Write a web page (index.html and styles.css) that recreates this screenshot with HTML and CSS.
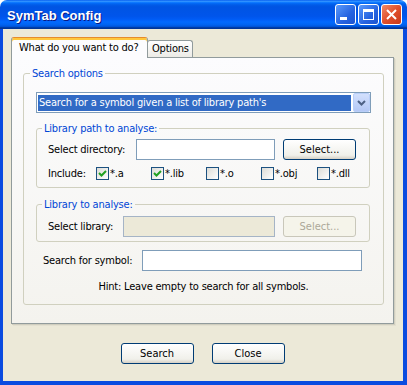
FILE: index.html
```html
<!DOCTYPE html>
<html lang="en">
<head>
    <meta charset="UTF-8">
    <title>SymTab Config</title>
    <link rel="stylesheet" href="styles.css">
</head>
<body>
    <div class="window">
        <div class="titlebar">
            <span class="title">SymTab Config</span>
            <div class="caption-buttons">
                <span class="cap-btn">
                    <svg width="19" height="19" viewBox="0 0 19 19"><rect x="4" y="12" width="7" height="3" fill="#fff"/></svg>
                </span>
                <span class="cap-btn">
                    <svg width="19" height="19" viewBox="0 0 19 19"><rect x="4.5" y="4.5" width="10" height="10" fill="none" stroke="#fff"/><rect x="4" y="4" width="11" height="3" fill="#fff"/></svg>
                </span>
                <span class="cap-btn close">
                    <svg width="19" height="19" viewBox="0 0 19 19"><path d="M5 5 L14 14 M14 5 L5 14" stroke="#fff" stroke-width="2"/></svg>
                </span>
            </div>
        </div>

        <div class="client">
            <div class="tabs">
                <div class="tab active">What do you want to do?</div>
                <div class="tab options">Options</div>
            </div>

            <div class="tab-page">
                <fieldset class="group outer">
                    <legend>Search options</legend>

                    <div class="combo">
                        <span class="combo-value">Search for a symbol given a list of library path's</span>
                        <span class="combo-button">
                            <svg width="9" height="6" viewBox="0 0 9 6"><path d="M1 1 L4.5 4.5 L8 1" fill="none" stroke="#4d6185" stroke-width="2"/></svg>
                        </span>
                    </div>

                    <fieldset class="group inner lib-path">
                        <legend>Library path to analyse:</legend>
                        <div class="row first">
                            <span class="label dir-label">Select directory:</span>
                            <input type="text" class="field dir-field">
                            <button class="btn select-btn">Select...</button>
                        </div>
                        <div class="row include">
                            <span class="label include-label">Include:</span>
                            <span class="check-item"><span class="check on"><svg width="11" height="11" viewBox="0 0 11 11"><path d="M2 5 L4.5 7.5 L9 3" fill="none" stroke="#21a121" stroke-width="2"/></svg></span>*.a</span>
                            <span class="check-item"><span class="check on"><svg width="11" height="11" viewBox="0 0 11 11"><path d="M2 5 L4.5 7.5 L9 3" fill="none" stroke="#21a121" stroke-width="2"/></svg></span>*.lib</span>
                            <span class="check-item"><span class="check"></span>*.o</span>
                            <span class="check-item"><span class="check"></span>*.obj</span>
                            <span class="check-item"><span class="check"></span>*.dll</span>
                        </div>
                    </fieldset>

                    <fieldset class="group inner lib-file">
                        <legend>Library to analyse:</legend>
                        <div class="row first">
                            <span class="label lib-label">Select library:</span>
                            <input type="text" class="field lib-field" disabled>
                            <button class="btn select-btn" disabled>Select...</button>
                        </div>
                    </fieldset>

                    <div class="row symbol-row">
                        <span class="label symbol-label">Search for symbol:</span>
                        <input type="text" class="field symbol-field">
                    </div>

                    <div class="hint">Hint: Leave empty to search for all symbols.</div>
                </fieldset>
            </div>

            <div class="dialog-buttons">
                <button class="btn">Search</button>
                <button class="btn">Close</button>
            </div>
        </div>
    </div>
</body>
</html>
```

FILE: styles.css
```css
body {
    margin: 0;
    font-family: "DejaVu Sans Condensed", "DejaVu Sans", sans-serif;
    font-size: 11px;
    letter-spacing: -0.2px;
    color: #000;
}

.window {
    width: 407px;
    height: 385px;
    display: flex;
    flex-direction: column;
}

/* title bar */
.titlebar {
    height: 29px;
    flex: none;
    box-sizing: border-box;
    display: flex;
    align-items: center;
    justify-content: space-between;
    padding: 0 5px 0 7px;
    border-radius: 7px 7px 0 0;
    background: linear-gradient(#0058ee 0%, #3593ff 4%, #288eff 6%, #127dff 8%, #036ffc 10%, #0262ee 14%, #0057e5 20%, #0054e3 24%, #0055eb 56%, #005bf5 66%, #026afe 76%, #0062ef 86%, #0052d6 92%, #0040ab 94%, #003092 100%);
}

.title {
    color: #fff;
    font: bold 13px "Liberation Sans", sans-serif;
    letter-spacing: 0;
    text-shadow: 1px 1px #0a1883;
    padding-top: 2px;
}

.caption-buttons {
    display: flex;
    gap: 2px;
}

.cap-btn {
    width: 21px;
    height: 21px;
    box-sizing: border-box;
    border: 1px solid #fff;
    border-radius: 3px;
    background: linear-gradient(135deg, #5a9afc, #2663e0 60%, #1c54d0);
    display: flex;
    align-items: center;
    justify-content: center;
}

.cap-btn.close {
    background: linear-gradient(135deg, #f08a68, #e1502c 50%, #c8381a);
}

/* dialog body */
.client {
    flex: 1;
    background: #ece9d8;
    border: solid #0a4be0;
    border-width: 0 4px 4px 3px;
    padding: 8px 0 0 8px;
}

.tabs {
    display: flex;
    align-items: flex-end;
    height: 20px;
    position: relative;
    z-index: 1;
}

.tab {
    height: 17px;
    box-sizing: border-box;
    border: 1px solid #919b9c;
    border-bottom: none;
    border-radius: 3px 3px 0 0;
    background: linear-gradient(#fff, #ecebe6);
    line-height: 15px;
    white-space: nowrap;
}

.tab.active {
    width: 137px;
    height: 21px;
    margin-bottom: -1px;
    padding-left: 7px;
    border-top-color: #e68b2c;
    box-shadow: inset 0 2px 0 #ffc73c;
    background: #fcfcfe;
    line-height: 19px;
}

.tab.options {
    width: 46px;
    margin-left: -1px;
    padding-left: 4px;
}

.tab-page {
    width: 383px;
    height: 267px;
    box-sizing: border-box;
    border: 1px solid #919b9c;
    background: linear-gradient(#fcfcfe, #f4f3ee);
    box-shadow: 1px 1px 0 #d0cebf, 2px 2px 0 #e3e0d0;
    padding: 9px 0 0 11px;
}

/* group boxes */
.group {
    margin: 0;
    border: 1px solid #d0d0bf;
    border-radius: 3px;
    box-sizing: border-box;
}

.group legend {
    color: #0046d5;
    line-height: 13px;
    padding: 0 2px;
    margin-left: -6px;
}

.group.outer {
    width: 361px;
    padding: 0 12px 11px 12px;
}

.group.inner {
    width: 334px;
    padding: 0 0 0 11px;
}

.lib-path {
    margin-top: 9px;
    padding-bottom: 6px !important;
}

.lib-file {
    margin-top: 10px;
    padding-bottom: 4px !important;
}

.combo {
    margin-top: 12px;
    width: 335px;
    height: 21px;
    box-sizing: border-box;
    border: 1px solid #7f9db9;
    background: #fff;
    display: flex;
}

.combo-value {
    flex: 1;
    margin: 2px 2px 1px 1px;
    background: #316ac5;
    color: #fff;
    line-height: 16px;
    padding-left: 1px;
    white-space: nowrap;
    overflow: hidden;
}

.combo-button {
    width: 17px;
    box-sizing: border-box;
    border: 1px solid #b9cff9;
    border-radius: 2px;
    background: linear-gradient(#d3e0fd, #b4c8f5);
    display: flex;
    align-items: center;
    justify-content: center;
}

.row {
    display: flex;
    align-items: center;
    white-space: nowrap;
}

.row.first {
    margin-top: 4px;
    height: 21px;
}

.lib-file .row.first {
    margin-top: 5px;
}

.row.include {
    margin-top: 5px;
    height: 16px;
}

.dir-label {
    width: 88px;
}

.include-label {
    width: 48px;
}

.lib-label {
    width: 75px;
}

.field {
    height: 21px;
    box-sizing: border-box;
    border: 1px solid #7f9db9;
    background: #fff;
    margin: 0;
    padding: 0 3px;
    font: inherit;
}

.field:disabled {
    background: #ece9d8;
    border-color: #a5b4c6;
}

.dir-field {
    width: 139px;
}

.lib-field {
    width: 152px;
}

.check-item {
    width: 55px;
    display: flex;
    align-items: center;
}

.check-item:last-child {
    width: auto;
    margin-left: 1px;
}

.check {
    width: 13px;
    height: 13px;
    box-sizing: border-box;
    border: 1px solid #1c5180;
    background: linear-gradient(135deg, #dcdcd7, #fff);
    margin-right: 1px;
    display: flex;
    align-items: center;
    justify-content: center;
}

.btn {
    width: 73px;
    height: 21px;
    box-sizing: border-box;
    border: 1px solid #003c74;
    border-radius: 3px;
    background: linear-gradient(#fff, #f0f0ea 80%, #d6d0c5);
    font: inherit;
    color: #000;
    padding: 0;
}

.btn:disabled {
    border-color: #c9c7ba;
    background: #f5f4ea;
    color: #aca899;
}

.select-btn {
    margin-left: 8px;
}

.symbol-row {
    margin-top: 8px;
    height: 21px;
}

.symbol-label {
    width: 99px;
    margin-left: 7px;
}

.symbol-field {
    width: 220px;
}

.hint {
    margin-top: 9px;
    line-height: 13px;
    text-align: center;
}

.dialog-buttons {
    width: 383px;
    margin-top: 19px;
    display: flex;
    justify-content: center;
    gap: 18px;
}
```
